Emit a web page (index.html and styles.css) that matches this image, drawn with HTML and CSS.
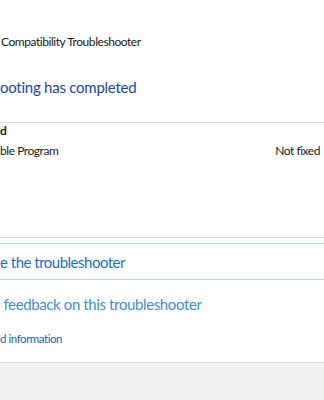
FILE: index.html
```html
<!DOCTYPE html>
<html lang="en">
<head>
    <meta charset="UTF-8">
    <meta name="viewport" content="width=device-width, initial-scale=1.0">
    <title>Compatibility Troubleshooter</title>
    <link rel="stylesheet" href="styles.css">
</head>
<body>
    <div class="window">
        <div class="content">
            <div class="title">Compatibility Troubleshooter</div>
            <h1 class="instruction">ooting has completed</h1>

            <div class="results">
                <div class="results-head">d</div>
                <div class="result-row">
                    <span>ble Program</span>
                    <span class="result-status">Not fixed</span>
                </div>
            </div>

            <div class="command-link">
                <a href="#">e the troubleshooter</a>
            </div>

            <div class="feedback-link">
                <a href="#">&nbsp;feedback on this troubleshooter</a>
            </div>

            <div class="detail-link">
                <a href="#">d information</a>
            </div>
        </div>

        <div class="footer"></div>
    </div>
</body>
</html>
```

FILE: styles.css
```css
body {
    margin: 0;
    background: #ffffff;
    font-family: Lato, "Noto Sans", sans-serif;
    color: #1a1a1a;
    letter-spacing: -0.45px;
    overflow: hidden;
}
.window {
    width: 324px;
    height: 400px;
    display: flex;
    flex-direction: column;
}
.content {
    flex: 1;
    padding-top: 34px;
}
.title {
    font-size: 12px;
    line-height: 16px;
    padding-left: 1px;
}
.instruction {
    margin: 26px 0 0 0;
    font-size: 15px;
    line-height: 22px;
    font-weight: normal;
    letter-spacing: -0.25px;
    color: #1c47a8;
}
.results {
    margin-top: 24px;
    height: 114px;
    border-top: 1px solid #d9d9d9;
    border-bottom: 1px solid #d9d9d9;
}
.results-head {
    padding-top: 1px;
    font-size: 12px;
    line-height: 14px;
    font-weight: bold;
}
.result-row {
    display: flex;
    justify-content: space-between;
    margin-top: 5px;
    padding-right: 4px;
    font-size: 12px;
    line-height: 16px;
}
.command-link {
    margin-top: 5px;
    height: 35px;
    border-top: 1px solid #b5d5f3;
    border-bottom: 1px solid #b5d5f3;
    display: flex;
    align-items: center;
}
.command-link a,
.feedback-link a {
    font-size: 15px;
    line-height: 22px;
    color: #1a6fd0;
    letter-spacing: -0.5px;
    text-decoration: none;
}
.feedback-link {
    margin-top: 13px;
}
.feedback-link a {
    color: #3d8de0;
    letter-spacing: -0.38px;
}
.detail-link {
    margin-top: 12px;
}
.detail-link a {
    font-size: 11.5px;
    line-height: 16px;
    color: #1f5fc4;
    text-decoration: none;
}
.footer {
    height: 37px;
    background: #f0f0f0;
    border-top: 1px solid #dfdfdf;
}
```
